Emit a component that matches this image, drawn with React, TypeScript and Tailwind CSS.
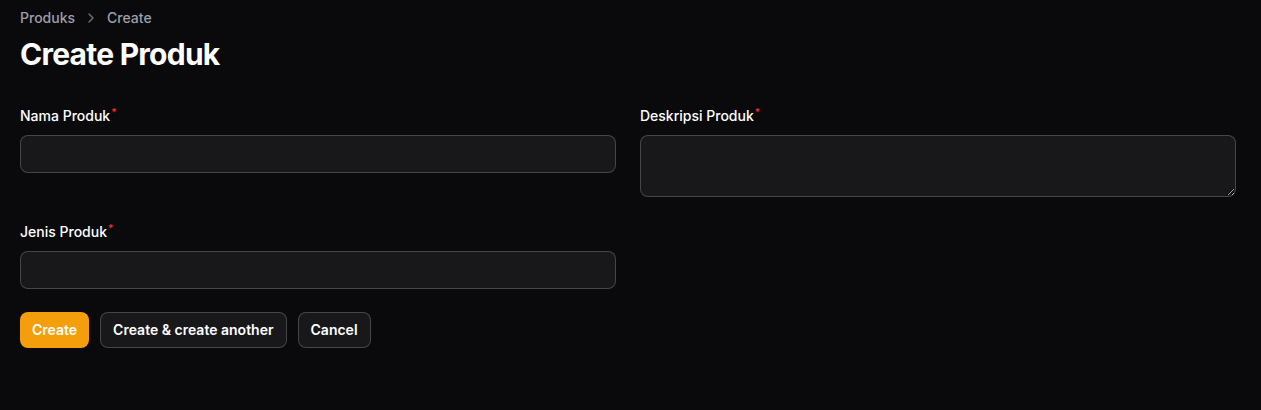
import React from 'react';
import { ChevronRight } from 'lucide-react';

function Label({ text }: { text: string }) {
  return (
    <label className="text-sm font-medium leading-6 text-white">
      {text}
      <sup className="ml-px font-medium text-red-500">*</sup>
    </label>
  );
}

export default function App() {
  return (
    <div className="min-h-[410px] w-full bg-[#0a0a0c] pl-5 pr-[25px] pt-2 font-['Inter',sans-serif] text-white">
      <nav className="flex items-center gap-x-2 text-sm font-medium text-zinc-400">
        <span>Produks</span>
        <ChevronRight className="h-4 w-4 text-zinc-500" strokeWidth={2} />
        <span>Create</span>
      </nav>
      <h1 className="mt-2 text-3xl font-bold tracking-tight text-white">Create Produk</h1>

      <form className="mt-8">
        <div className="grid grid-cols-2 gap-x-6 gap-y-[23px]">
          <div className="flex flex-col gap-y-[7px]">
            <Label text="Nama Produk" />
            <input
              type="text"
              className="h-[38px] w-full rounded-lg border border-white/20 bg-[#18181a] px-3 text-sm text-white outline-none"
            />
          </div>
          <div className="flex flex-col gap-y-[7px]">
            <Label text="Deskripsi Produk" />
            <textarea
              className="block h-[62px] w-full resize-y rounded-lg border border-white/20 bg-[#18181a] px-3 py-1.5 text-sm text-white outline-none"
            />
          </div>
          <div className="flex flex-col gap-y-[7px]">
            <Label text="Jenis Produk" />
            <input
              type="text"
              className="h-[38px] w-full rounded-lg border border-white/20 bg-[#18181a] px-3 text-sm text-white outline-none"
            />
          </div>
        </div>

        <div className="mt-[23px] flex items-center gap-[11px]">
          <button type="button" className="h-9 rounded-lg bg-[#f59e0b] px-3 text-sm font-semibold text-white">
            Create
          </button>
          <button type="button" className="h-9 rounded-lg border border-white/20 bg-[#18181a] px-3 text-sm font-semibold text-white">
            Create &amp; create another
          </button>
          <button type="button" className="h-9 rounded-lg border border-white/20 bg-[#18181a] px-3 text-sm font-semibold text-white">
            Cancel
          </button>
        </div>
      </form>
    </div>
  );
}
